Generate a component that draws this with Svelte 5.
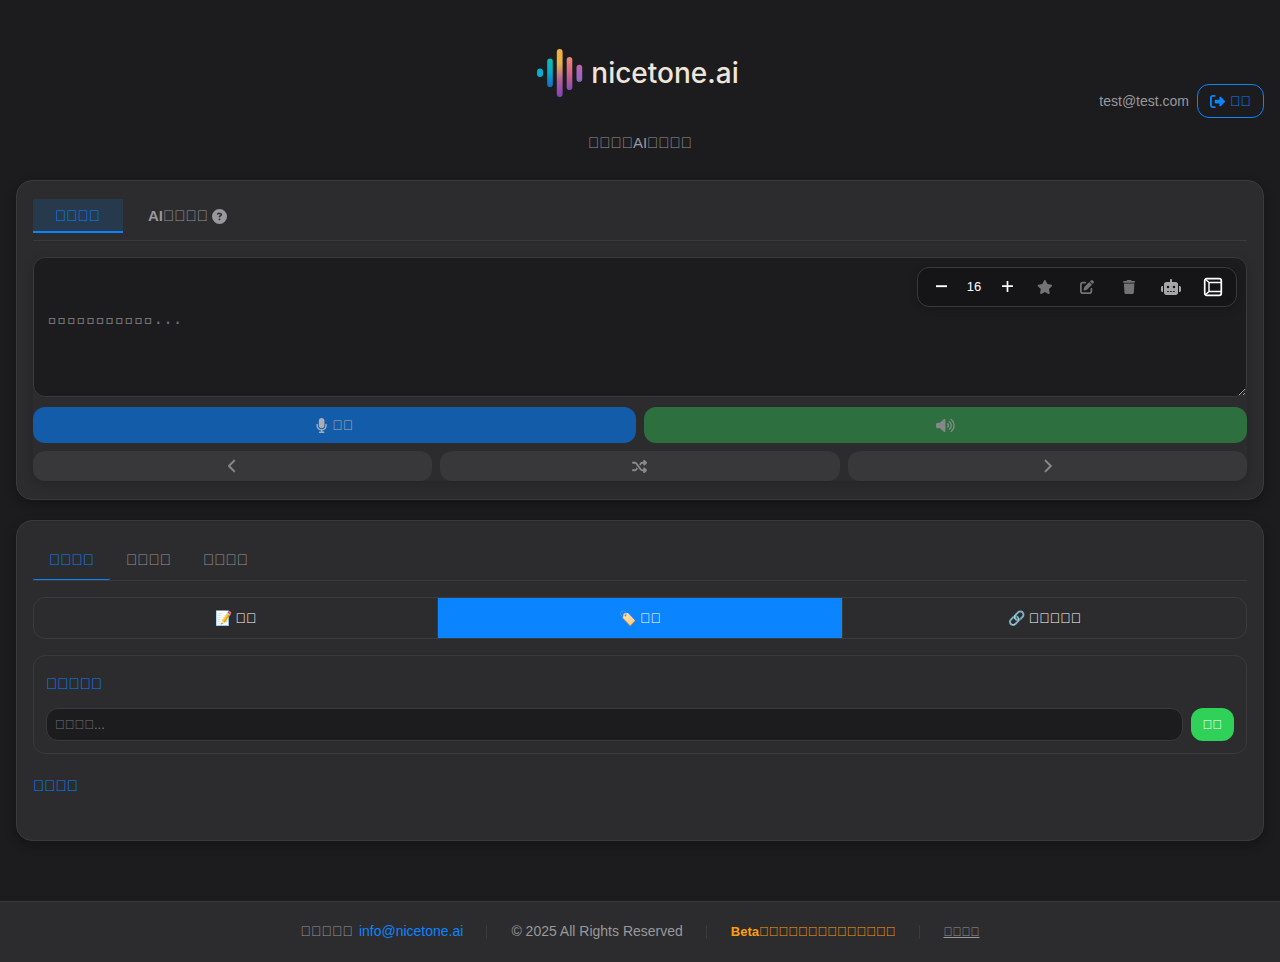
<script>
  const glyphs = (n) => '\u{F0000}'.repeat(n);

  let size = $state(16);
  let text = $state('');
  let tag = $state('');
  let mode = $state(0);
  let view = $state(1);
  let section = $state(0);

  const views = [
    { icon: '📝', label: glyphs(2) },
    { icon: '🏷️', label: glyphs(2) },
    { icon: '🔗', label: glyphs(5) }
  ];

  const icons = {
    logout: [512, 'M377.9 105.9L500.7 228.7c7.2 7.2 11.3 17.1 11.3 27.3s-4.1 20.1-11.3 27.3L377.9 406.1c-6.4 6.4-15 9.9-24 9.9c-18.7 0-33.9-15.2-33.9-33.9l0-62.1-128 0c-17.7 0-32-14.3-32-32l0-64c0-17.7 14.3-32 32-32l128 0 0-62.1c0-18.7 15.2-33.9 33.9-33.9c9 0 17.6 3.6 24 9.9zM160 96L96 96c-17.7 0-32 14.3-32 32l0 256c0 17.7 14.3 32 32 32l64 0c17.7 0 32 14.3 32 32s-14.3 32-32 32l-64 0c-53 0-96-43-96-96L0 128C0 75 43 32 96 32l64 0c17.7 0 32 14.3 32 32s-14.3 32-32 32z'],
    help: [512, 'M256 512A256 256 0 1 0 256 0a256 256 0 1 0 0 512zM169.8 165.3c7.9-22.3 29.1-37.3 52.8-37.3l58.3 0c34.9 0 63.1 28.3 63.1 63.1c0 22.6-12.1 43.5-31.7 54.8L280 264.4c-.2 13-10.9 23.6-24 23.6c-13.3 0-24-10.7-24-24l0-13.5c0-8.6 4.6-16.5 12.1-20.8l44.3-25.4c4.7-2.7 7.6-7.7 7.6-13.1c0-8.4-6.8-15.1-15.1-15.1l-58.3 0c-3.4 0-6.4 2.1-7.5 5.3l-.4 1.2c-4.4 12.5-18.2 19-30.6 14.6s-19-18.2-14.6-30.6l.4-1.2zM224 352a32 32 0 1 1 64 0 32 32 0 1 1 -64 0z'],
    star: [576, 'M316.9 18C311.6 7 300.4 0 288.1 0s-23.4 7-28.8 18L195 150.3 51.4 171.5c-12 1.8-22 10.2-25.7 21.7s-.7 24.2 7.9 32.7L137.8 329 113.2 474.7c-2 12 3 24.2 12.9 31.3s23 8 33.8 2.3l128.3-68.5 128.3 68.5c10.8 5.7 23.9 4.9 33.8-2.3s14.9-19.3 12.9-31.3L438.5 329 542.7 225.9c8.6-8.5 11.7-21.2 7.9-32.7s-13.7-19.9-25.7-21.7L381.2 150.3 316.9 18z'],
    edit: [512, 'M471.6 21.7c-21.9-21.9-57.3-21.9-79.2 0L362.3 51.7l97.9 97.9 30.1-30.1c21.9-21.9 21.9-57.3 0-79.2L471.6 21.7zm-299.2 220c-6.1 6.1-10.8 13.6-13.5 21.9l-29.6 88.8c-2.9 8.6-.6 18.1 5.8 24.6s15.9 8.7 24.6 5.8l88.8-29.6c8.2-2.7 15.7-7.4 21.9-13.5L437.7 172.3 339.7 74.3 172.4 241.7zM96 64C43 64 0 107 0 160L0 416c0 53 43 96 96 96l256 0c53 0 96-43 96-96l0-96c0-17.7-14.3-32-32-32s-32 14.3-32 32l0 96c0 17.7-14.3 32-32 32L96 448c-17.7 0-32-14.3-32-32l0-256c0-17.7 14.3-32 32-32l96 0c17.7 0 32-14.3 32-32s-14.3-32-32-32L96 64z'],
    trash: [448, 'M135.2 17.7L128 32 32 32C14.3 32 0 46.3 0 64S14.3 96 32 96l384 0c17.7 0 32-14.3 32-32s-14.3-32-32-32l-96 0-7.2-14.3C307.4 6.8 296.3 0 284.2 0L163.8 0c-12.1 0-23.2 6.8-28.6 17.7zM416 128L32 128 53.2 467c1.6 25.3 22.6 45 47.9 45l245.8 0c25.3 0 46.3-19.7 47.9-45L416 128z'],
    robot: [640, 'M320 0c17.7 0 32 14.3 32 32l0 64 120 0c39.8 0 72 32.2 72 72l0 272c0 39.8-32.2 72-72 72l-304 0c-39.8 0-72-32.2-72-72l0-272c0-39.8 32.2-72 72-72l120 0 0-64c0-17.7 14.3-32 32-32zM208 384c-8.8 0-16 7.2-16 16s7.2 16 16 16l32 0c8.8 0 16-7.2 16-16s-7.2-16-16-16l-32 0zm96 0c-8.8 0-16 7.2-16 16s7.2 16 16 16l32 0c8.8 0 16-7.2 16-16s-7.2-16-16-16l-32 0zm96 0c-8.8 0-16 7.2-16 16s7.2 16 16 16l32 0c8.8 0 16-7.2 16-16s-7.2-16-16-16l-32 0zM264 256a40 40 0 1 0 -80 0 40 40 0 1 0 80 0zm152 40a40 40 0 1 0 0-80 40 40 0 1 0 0 80zM48 224l16 0 0 192-16 0c-26.5 0-48-21.5-48-48l0-96c0-26.5 21.5-48 48-48zm544 0c26.5 0 48 21.5 48 48l0 96c0 26.5-21.5 48-48 48l-16 0 0-192 16 0z'],
    mic: [384, 'M192 0C139 0 96 43 96 96l0 160c0 53 43 96 96 96s96-43 96-96l0-160c0-53-43-96-96-96zM64 216c0-13.3-10.7-24-24-24s-24 10.7-24 24l0 40c0 89.1 66.2 162.7 152 174.4l0 33.6-48 0c-13.3 0-24 10.7-24 24s10.7 24 24 24l72 0 72 0c13.3 0 24-10.7 24-24s-10.7-24-24-24l-48 0 0-33.6c85.8-11.7 152-85.3 152-174.4l0-40c0-13.3-10.7-24-24-24s-24 10.7-24 24l0 40c0 70.7-57.3 128-128 128s-128-57.3-128-128l0-40z'],
    volume: [640, 'M533.6 32.5C598.5 85.2 640 165.8 640 256s-41.5 170.7-106.4 223.5c-10.3 8.4-25.4 6.8-33.8-3.5s-6.8-25.4 3.5-33.8C557.5 398.2 592 331.2 592 256s-34.5-142.2-88.7-186.3c-10.3-8.4-11.8-23.5-3.5-33.8s23.5-11.8 33.8-3.5zM473.1 107c43.2 35.2 70.9 88.9 70.9 149s-27.7 113.8-70.9 149c-10.3 8.4-25.4 6.8-33.8-3.5s-6.8-25.4 3.5-33.8C475.3 341.3 496 301.1 496 256s-20.7-85.3-53.2-111.8c-10.3-8.4-11.8-23.5-3.5-33.8s23.5-11.8 33.8-3.5zm-60.5 74.5C434.1 199.1 448 225.9 448 256s-13.9 56.9-35.4 74.5c-10.3 8.4-25.4 6.8-33.8-3.5s-6.8-25.4 3.5-33.8C393.1 284.4 400 271 400 256s-6.9-28.4-17.7-37.3c-10.3-8.4-11.8-23.5-3.5-33.8s23.5-11.8 33.8-3.5zM301.1 34.8C312.6 40 320 51.4 320 64l0 384c0 12.6-7.4 24-18.9 29.2s-25 3.1-34.4-5.3L131.8 352 64 352c-35.3 0-64-28.7-64-64l0-64c0-35.3 28.7-64 64-64l67.8 0L266.7 40.1c9.4-8.4 22.9-10.4 34.4-5.3z'],
    prev: [320, 'M9.4 233.4c-12.5 12.5-12.5 32.8 0 45.3l192 192c12.5 12.5 32.8 12.5 45.3 0s12.5-32.8 0-45.3L77.3 256 246.6 86.6c12.5-12.5 12.5-32.8 0-45.3s-32.8-12.5-45.3 0l-192 192z'],
    next: [320, 'M310.6 233.4c12.5 12.5 12.5 32.8 0 45.3l-192 192c-12.5 12.5-32.8 12.5-45.3 0s-12.5-32.8 0-45.3L242.7 256 73.4 86.6c-12.5-12.5-12.5-32.8 0-45.3s32.8-12.5 45.3 0l192 192z'],
    shuffle: [512, 'M403.8 34.4c12-5 25.7-2.2 34.9 6.9l64 64c6 6 9.4 14.1 9.4 22.6s-3.4 16.6-9.4 22.6l-64 64c-9.2 9.2-22.9 11.9-34.9 6.9s-19.8-16.6-19.8-29.6l0-32-32 0c-10.1 0-19.6 4.7-25.6 12.8L284 229.3 244 176l31.2-41.6C293.3 110.2 321.8 96 352 96l32 0 0-32c0-12.9 7.8-24.6 19.8-29.6zM164 282.7L204 336l-31.2 41.6C154.7 401.8 126.2 416 96 416l-64 0c-17.7 0-32-14.3-32-32s14.3-32 32-32l64 0c10.1 0 19.6-4.7 25.6-12.8L164 282.7zm274.6 188c-9.2 9.2-22.9 11.9-34.9 6.9s-19.8-16.6-19.8-29.6l0-32-32 0c-30.2 0-58.7-14.2-76.8-38.4L121.6 172.8c-6-8.1-15.5-12.8-25.6-12.8l-64 0c-17.7 0-32-14.3-32-32s14.3-32 32-32l64 0c30.2 0 58.7 14.2 76.8 38.4L326.4 339.2c6 8.1 15.5 12.8 25.6 12.8l32 0 0-32c0-12.9 7.8-24.6 19.8-29.6s25.7-2.2 34.9 6.9l64 64c6 6 9.4 14.1 9.4 22.6s-3.4 16.6-9.4 22.6l-64 64z']
  };
</script>

{#snippet icon(name, height)}
  <svg class="icon" viewBox="0 0 {icons[name][0]} 512" {height} width={(icons[name][0] / 512) * height} aria-hidden="true">
    <path d={icons[name][1]} fill="currentColor" />
  </svg>
{/snippet}

<div class="page">
  <header>
    <div class="brand">
      <h1 class="logo">
        <svg width="46" height="48" viewBox="0 0 46 48" aria-hidden="true">
          <defs>
            <linearGradient id="b1" x2="0" y2="1"><stop stop-color="#10bcae" /><stop offset=".5" stop-color="#06a9cb" /><stop offset="1" stop-color="#1a6cc4" /></linearGradient>
            <linearGradient id="b2" x2="0" y2="1"><stop stop-color="#f0b440" /><stop offset=".3" stop-color="#e6b24a" /><stop offset=".65" stop-color="#b0609c" /><stop offset="1" stop-color="#843fba" /></linearGradient>
            <linearGradient id="b3" x2="0" y2="1"><stop stop-color="#ee8870" /><stop offset=".5" stop-color="#d0648c" /><stop offset="1" stop-color="#8a49b8" /></linearGradient>
            <linearGradient id="b4" x2="0" y2="1"><stop stop-color="#c062ac" /><stop offset="1" stop-color="#8c68c8" /></linearGradient>
          </defs>
          <rect x="0" y="19.5" width="6" height="8.5" rx="3" fill="#08aed0" />
          <rect x="10.2" y="9.5" width="5.6" height="28.5" rx="2.8" fill="url(#b1)" />
          <rect x="19.8" y="0" width="5.8" height="48" rx="2.9" fill="url(#b2)" />
          <rect x="29.7" y="8" width="5.6" height="33" rx="2.8" fill="url(#b3)" />
          <rect x="39.5" y="15.7" width="5.7" height="17" rx="2.8" fill="url(#b4)" />
        </svg>
        <span>nicetone.ai</span>
      </h1>
      <p class="tagline">{glyphs(4)}AI{glyphs(4)}</p>
    </div>
    <div class="user">
      <span>test@test.com</span>
      <button class="logout">{@render icon('logout', 15)}<span>{glyphs(2)}</span></button>
    </div>
  </header>

  <main>
    <section class="card">
      <nav class="modes">
        <button class:active={mode === 0} onclick={() => (mode = 0)}>{glyphs(4)}</button>
        <button class:active={mode === 1} onclick={() => (mode = 1)}><span>AI{glyphs(4)}</span>{@render icon('help', 15)}</button>
      </nav>

      <div class="practice">
        <div class="editor">
          <textarea bind:value={text} aria-label="Text" placeholder={glyphs(11) + '...'}></textarea>
          <div class="toolbar">
            <div class="stepper">
              <button aria-label="Smaller" onclick={() => (size -= 1)}>
                <svg width="12" height="12" viewBox="0 0 12 12"><path d="M1 5.2h11" stroke="currentColor" stroke-width="1.9" /></svg>
              </button>
              <output>{size}</output>
              <button aria-label="Larger" onclick={() => (size += 1)}>
                <svg width="12" height="12" viewBox="0 0 12 12"><path d="M1 5.2h11M6.5 0v11" stroke="currentColor" stroke-width="1.7" /></svg>
              </button>
            </div>
            <div class="tools">
              <button class="dim" aria-label="Favourite" disabled>{@render icon('star', 14)}</button>
              <button class="dim" aria-label="Edit" disabled>{@render icon('edit', 14)}</button>
              <button class="dim" aria-label="Delete" disabled>{@render icon('trash', 14)}</button>
              <button class="soft" aria-label="Assistant" disabled>{@render icon('robot', 16)}</button>
              <button aria-label="Full screen">
                <svg width="20" height="20" viewBox="0 0 20 20" fill="none" stroke="currentColor">
                  <rect x="1.7" y="1.7" width="16.6" height="16.6" rx="2" stroke-width="1.7" />
                  <path d="M5.5 5.5H18M6 5.5V14.5M5.5 14.5H18M2 2L6 5.5M2 18L6 14.5" stroke-width="1.4" />
                </svg>
              </button>
            </div>
          </div>
        </div>
        <div class="row two">
          <button class="record" disabled>{@render icon('mic', 15)}<span>{glyphs(2)}</span></button>
          <button class="play" aria-label="Play" disabled>{@render icon('volume', 15)}</button>
        </div>
        <div class="row three">
          <button class="step" aria-label="Previous" disabled>{@render icon('prev', 14)}</button>
          <button aria-label="Shuffle" disabled>{@render icon('shuffle', 15)}</button>
          <button class="step" aria-label="Next" disabled>{@render icon('next', 14)}</button>
        </div>
      </div>
    </section>

    <section class="card library">
      <nav class="sections">
        {#each [0, 1, 2] as i}
          <button class:active={section === i} onclick={() => (section = i)}>{glyphs(4)}</button>
        {/each}
      </nav>
      <div class="segments">
        {#each views as v, i}
          <button class:active={view === i} onclick={() => (view = i)}>{v.icon} {v.label}</button>
        {/each}
      </div>
      <form class="add" onsubmit={(e) => e.preventDefault()}>
        <h2><label for="tag">{glyphs(5)}</label></h2>
        <div class="field">
          <input id="tag" type="text" bind:value={tag} placeholder={glyphs(4) + '...'} />
          <button>{glyphs(2)}</button>
        </div>
      </form>
      <h2>{glyphs(4)}</h2>
    </section>
  </main>

  <footer>
    <span>{glyphs(5)} <a class="mail" href="mailto:info@nicetone.ai">info@nicetone.ai</a></span>
    <span class="sep"></span>
    <span>© 2025 All Rights Reserved</span>
    <span class="sep"></span>
    <strong>Beta{glyphs(14)}</strong>
    <span class="sep"></span>
    <a class="terms" href="#terms">{glyphs(4)}</a>
  </footer>
</div>

<style>
  :global(body) {
    margin: 0;
    background: #1c1c1e;
  }
  .page {
    min-height: 100vh;
    display: flex;
    flex-direction: column;
    color: #98989d;
    font: 14px/20px 'Liberation Sans', Arial, sans-serif;
  }
  * {
    box-sizing: border-box;
  }
  button,
  input {
    font: inherit;
    color: inherit;
  }
  button {
    margin: 0;
    padding: 0;
    border: 0;
    background: none;
    cursor: pointer;
    display: flex;
    align-items: center;
    justify-content: center;
  }
  button:disabled {
    cursor: default;
  }
  .icon {
    flex: none;
  }
  h1,
  h2,
  p {
    margin: 0;
  }

  header {
    display: grid;
    grid-template-columns: 1fr auto 1fr;
    align-items: center;
    padding: 49px 16px 27px;
  }
  .brand {
    grid-column: 2;
    display: flex;
    flex-direction: column;
    align-items: center;
    gap: 36px;
  }
  .logo {
    display: flex;
    align-items: center;
    gap: 8px;
    height: 48px;
    margin-right: 4px;
    font: 500 28px/48px Inter, sans-serif;
    color: #eee6da;
  }
  .tagline {
    font-size: 15px;
  }
  .user {
    display: flex;
    align-items: center;
    justify-content: flex-end;
    gap: 8px;
  }
  .logout {
    height: 34px;
    padding: 0 12px;
    gap: 5px;
    border: 1px solid #0a84ff;
    border-radius: 12px;
    color: #0a84ff;
  }

  main {
    display: flex;
    flex-direction: column;
    gap: 20px;
    padding: 0 16px;
  }
  .card {
    padding: 18px 16px;
    border: 1px solid #3a3a3c;
    border-radius: 16px;
    background: #2c2c2e;
    box-shadow: 0 4px 12px rgba(0, 0, 0, 0.3);
  }
  .modes {
    display: flex;
    gap: 3px;
    padding-bottom: 7px;
    margin-bottom: 16px;
    border-bottom: 1px solid #3a3a3c;
    font-size: 15px;
    font-weight: 700;
  }
  .modes button {
    height: 34px;
    padding: 2px 23px 0 22px;
    gap: 4px;
    border-bottom: 2px solid transparent;
  }
  .modes .active {
    color: #0a84ff;
    border-color: #0a84ff;
    background: rgba(10, 132, 255, 0.15);
  }
  .practice {
    display: grid;
    border-radius: 12px;
    box-shadow: 0 4px 12px rgba(0, 0, 0, 0.15);
  }
  .editor {
    position: relative;
    display: grid;
    margin-bottom: 10px;
  }
  textarea {
    height: 140px;
    padding: 52px 14px 14px;
    border: 1px solid #3a3a3c;
    border-radius: 12px;
    background: #1c1c1e;
    color: #fff;
    font: 16px/20px 'Liberation Mono', monospace;
    resize: vertical;
  }
  textarea::placeholder {
    color: #757575;
  }
  .toolbar {
    position: absolute;
    top: 10px;
    right: 10px;
    display: flex;
    gap: 4px;
    padding: 2px 6px;
    border: 1px solid #3a3a3c;
    border-radius: 12px;
    background: #151518;
    color: #fff;
    box-shadow: 0 2px 8px rgba(0, 0, 0, 0.2);
  }
  .toolbar button {
    width: 34px;
    height: 34px;
  }
  .stepper {
    display: flex;
    align-items: center;
  }
  output {
    width: 32px;
    text-align: center;
    font-size: 13px;
  }
  .tools {
    display: flex;
    gap: 8px;
  }
  .dim {
    color: #737374;
  }
  .soft {
    color: #a6a6a7;
  }
  .row {
    display: grid;
    gap: 8px;
  }
  .row button {
    border-radius: 12px;
    background: #38383a;
    color: #8a8a8c;
  }
  .two {
    grid-template-columns: 1fr 1fr;
    margin-bottom: 8px;
  }
  .two button {
    height: 36px;
  }
  .row .record {
    gap: 5px;
    background: #125caa;
    color: #abaeb2;
  }
  .row .play {
    background: #2d6f3e;
    color: #848886;
  }
  .three {
    grid-template-columns: 1fr 1fr 1fr;
  }
  .three button {
    height: 30px;
  }
  .step path {
    stroke: currentColor;
    stroke-width: 16px;
  }

  .library {
    padding-bottom: 43px;
  }
  .sections {
    display: flex;
    margin-bottom: 16px;
    border-bottom: 1px solid #3a3a3c;
    font-size: 15px;
  }
  .sections button {
    height: 41px;
    padding: 2px 16px 0;
    border-bottom: 1px solid transparent;
    border-radius: 2px;
  }
  .sections .active {
    color: #0a84ff;
    border-color: #0a84ff;
  }
  .segments {
    display: grid;
    grid-template-columns: 1fr 1fr 1fr;
    margin-bottom: 16px;
    border: 1px solid #3a3a3c;
    border-radius: 12px;
    overflow: hidden;
    color: #fff;
  }
  .segments button {
    height: 40px;
  }
  .segments button:first-child {
    border-right: 1px solid #3a3a3c;
  }
  .segments button:last-child {
    border-left: 1px solid #3a3a3c;
  }
  .segments .active {
    background: #0a84ff;
  }
  .add {
    padding: 12px;
    margin-bottom: 21px;
    border: 1px solid #3a3a3c;
    border-radius: 12px;
  }
  h2 {
    color: #0a84ff;
    font-size: 15px;
    line-height: 22px;
  }
  .add h2 {
    margin: 5px 0 13px;
  }
  .field {
    display: flex;
    gap: 8px;
    font-size: 13px;
  }
  input {
    flex: 1;
    min-width: 0;
    height: 33px;
    padding: 0 8px;
    border: 1px solid #3a3a3c;
    border-radius: 12px;
    background: #1c1c1e;
  }
  input::placeholder {
    color: #757575;
  }
  .field button {
    padding: 0 12px;
    border-radius: 12px;
    background: #30d158;
    color: #fff;
  }

  footer {
    display: flex;
    flex-wrap: wrap;
    align-items: baseline;
    justify-content: center;
    gap: 24px;
    margin-top: 60px;
    padding: 19px 16px 21px;
    border-top: 1px solid #3a3a3c;
    background: #2c2c2e;
  }
  .sep {
    align-self: center;
    width: 1px;
    height: 14px;
    margin-left: -1px;
    background: #3a3a3c;
  }
  .mail {
    margin-left: 2px;
    color: #0a84ff;
    text-decoration: none;
  }
  strong {
    color: #ff9f0a;
    font-size: 13px;
  }
  .terms {
    color: inherit;
    font-size: 12px;
  }
</style>
